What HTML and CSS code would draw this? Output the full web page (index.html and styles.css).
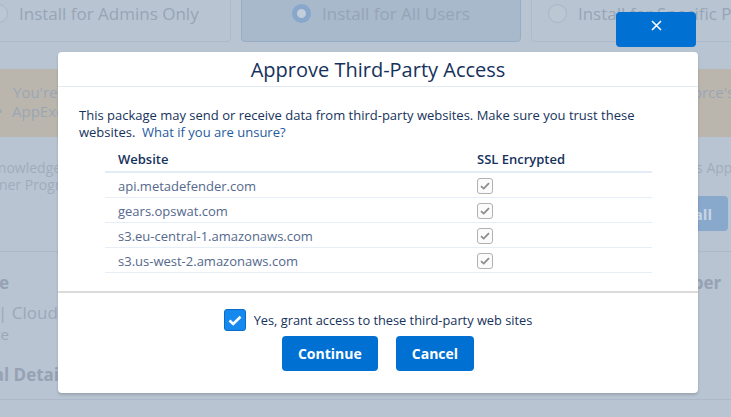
FILE: index.html
```html
<!DOCTYPE html>
<html lang="en">
<head>
  <meta charset="UTF-8" />
  <title>Approve Third-Party Access</title>
  <link rel="stylesheet" href="styles.css">
</head>
<body>
  <div class="page">
    <div class="options">
      <div class="option first"><span class="radio"></span>Install for Admins Only</div>
      <div class="option selected"><span class="radio on"></span>Install for All Users</div>
      <div class="option"><span class="radio"></span>Install for Specific Profiles...</div>
    </div>

    <div class="notice">
      <div class="row">
        <span class="left pad">You're installing a package made by a third party.</span>
        <span class="right notice-tail">Salesforce's</span>
      </div>
      <div class="row">
        <span class="left pad"><span class="dot">&bull;</span>AppExchange listing reviewed</span>
      </div>
    </div>

    <div class="terms">
      <div class="row">
        <span class="left ind-ack">acknowledge that I have read</span>
        <span class="right terms-tail">this AppExchange</span>
      </div>
      <div class="row">
        <span class="left ind-part">Partner Program terms</span>
      </div>
      <div class="install-row">
        <button class="ghost-btn">Install</button>
      </div>
    </div>

    <div class="details">
      <div class="row">
        <span class="left-end strong"><span>Package</span></span>
        <span class="right strong number-tail">Number</span>
      </div>
      <div class="row line-b">
        <span class="left ind-cloud">| Cloud Security</span>
      </div>
      <div class="row line-c">
        <span class="left-end"><span>Private</span></span>
      </div>
      <div class="row line-d">
        <span class="left strong ind-add">Additional Details</span>
      </div>
    </div>
  </div>

  <button class="close-btn" aria-label="Close">
    <svg width="11" height="11" viewBox="0 0 11 11"><path d="M1 1L10 10M10 1L1 10" stroke="#fff" stroke-width="1.6" fill="none"/></svg>
  </button>

  <div class="modal">
    <div class="modal-header">
      <h2>Approve Third-Party Access</h2>
    </div>
    <div class="modal-body">
      <p>This package may send or receive data from third-party websites. Make sure you trust these websites. &nbsp;<a href="#">What if you are unsure?</a></p>
      <table class="sites">
        <thead>
          <tr><th class="col-site">Website</th><th>SSL Encrypted</th></tr>
        </thead>
        <tbody>
          <tr><td>api.metadefender.com</td><td><span class="ssl"><svg width="10" height="8" viewBox="0 0 10 8"><path d="M1 4.2L3.7 6.6L9 1.2" stroke="#8c8c8c" stroke-width="1.8" fill="none"/></svg></span></td></tr>
          <tr><td>gears.opswat.com</td><td><span class="ssl"><svg width="10" height="8" viewBox="0 0 10 8"><path d="M1 4.2L3.7 6.6L9 1.2" stroke="#8c8c8c" stroke-width="1.8" fill="none"/></svg></span></td></tr>
          <tr><td>s3.eu-central-1.amazonaws.com</td><td><span class="ssl"><svg width="10" height="8" viewBox="0 0 10 8"><path d="M1 4.2L3.7 6.6L9 1.2" stroke="#8c8c8c" stroke-width="1.8" fill="none"/></svg></span></td></tr>
          <tr><td>s3.us-west-2.amazonaws.com</td><td><span class="ssl"><svg width="10" height="8" viewBox="0 0 10 8"><path d="M1 4.2L3.7 6.6L9 1.2" stroke="#8c8c8c" stroke-width="1.8" fill="none"/></svg></span></td></tr>
        </tbody>
      </table>
    </div>
    <div class="modal-footer">
      <label class="grant">
        <span class="box"><svg width="14" height="11" viewBox="0 0 14 11"><path d="M1.5 5.5L5.2 9L12.5 1.8" stroke="#fff" stroke-width="2.6" fill="none"/></svg></span>
        Yes, grant access to these third-party web sites
      </label>
      <div class="actions">
        <button class="btn">Continue</button>
        <button class="btn">Cancel</button>
      </div>
    </div>
  </div>
</body>
</html>
```

FILE: styles.css
```css
body {
  margin: 0;
  background: #b8c4d2;
  font-family: "Open Sans", Lato, sans-serif;
  color: #16325c;
  overflow: hidden;
  height: 417px;
}
.page {
  color: #97a4b6;
}

/* background page, under the overlay */
.options {
  display: flex;
  gap: 10px;
  margin-top: -18px;
  margin-left: -29px;
}
.option {
  flex: none;
  width: 280px;
  height: 60px;
  box-sizing: border-box;
  border: 1px solid #adbacb;
  border-radius: 4px;
  display: flex;
  align-items: center;
  justify-content: center;
  gap: 11px;
  padding-top: 2px;
  font-size: 17px;
  white-space: nowrap;
}
.option.first {
  width: 260px;
  justify-content: flex-start;
  padding-left: 17px;
}
.option.selected {
  background: #a8b9cc;
  border-color: #98acc3;
}
.radio {
  width: 19px;
  height: 19px;
  box-sizing: border-box;
  border-radius: 50%;
  border: 1px solid #a9b6c6;
  background: #bcc7d4;
}
.radio.on {
  border: 5px solid #88a7cb;
  background: #c3cedb;
}
.row {
  display: flex;
  justify-content: space-between;
  white-space: nowrap;
}
.right {
  flex: none;
  overflow: hidden;
}
.left-end {
  display: flex;
  justify-content: flex-end;
  width: 9px;
}
.pad {
  padding-left: 13px;
}
.dot {
  display: inline-block;
  width: 15px;
  margin-left: -16px;
}
.notice {
  margin-top: 27px;
  height: 68px;
  background: #bab6ae;
  box-sizing: border-box;
  padding-top: 14px;
  font-size: 15px;
  line-height: 19px;
  color: #9ba6b5;
}
.notice-tail { width: 79px; }
.terms {
  padding-top: 22px;
  font-size: 14px;
  line-height: 17px;
  color: #a0acbc;
}
.terms-tail { width: 52px; }
.ind-ack { text-indent: -24px; }
.ind-part { text-indent: -28px; }
.install-row {
  display: flex;
  justify-content: flex-end;
  padding: 3px 3px 0 0;
}
.ghost-btn {
  width: 90px;
  height: 35px;
  border: none;
  border-radius: 4px;
  background: #88a8cc;
  color: #c8d5e3;
  font: bold 15px "Open Sans", sans-serif;
  text-align: right;
  padding-right: 16px;
}
.details {
  margin-top: 20px;
  border-top: 1px solid #adb9c8;
  border-bottom: 1px solid #adb9c8;
  padding: 20px 0 13px;
  font-size: 17px;
  line-height: 22px;
  color: #9ca8b8;
}
.strong {
  font-weight: bold;
  color: #96a2b3;
}
.number-tail { width: 57px; text-indent: -23px; }
.line-b { margin-top: 8px; }
.line-c { font-size: 15px; line-height: 20px; }
.ind-cloud { text-indent: -2px; }
.line-d { margin-top: 20px; }
.ind-add { text-indent: -79px; }

/* modal */
.close-btn {
  position: absolute;
  top: 12px;
  left: 616px;
  width: 80px;
  height: 35px;
  border: none;
  border-radius: 4px;
  background: #0070d2;
  display: flex;
  align-items: center;
  justify-content: center;
  padding: 0 0 9px;
}
.modal {
  position: absolute;
  top: 52px;
  left: 58px;
  width: 640px;
  height: 341px;
  background: #fff;
  border-radius: 4px;
  box-shadow: 0 2px 3px rgba(0,0,0,0.16);
  display: flex;
  flex-direction: column;
}
.modal-header {
  height: 35px;
  box-sizing: border-box;
  border-bottom: 1px solid #e1e9f2;
  padding-top: 5px;
  text-align: center;
}
.modal-header h2 {
  margin: 0;
  font-size: 20px;
  line-height: 26px;
  font-weight: 500;
  color: #16325c;
}
.modal-body {
  padding: 20px 21px 0;
  flex: 1;
}
.modal-body p {
  margin: 0;
  font-size: 13px;
  line-height: 17px;
}
.modal-body a {
  color: #1f5aa0;
  text-decoration: none;
}
.sites {
  margin: 5px 0 0 26px;
  width: 547px;
  border-collapse: collapse;
  font-size: 13px;
}
.sites th {
  text-align: left;
  font-weight: 600;
  height: 25px;
  padding: 0 0 0 13px;
  border-bottom: 2px solid #e3ecf6;
  color: #16325c;
}
.sites .col-site {
  width: 346px;
}
.sites td {
  height: 23px;
  padding: 1px 0 0 13px;
  border-bottom: 1px solid #e6eef7;
  color: #54698d;
}
.ssl {
  width: 16px;
  height: 16px;
  box-sizing: border-box;
  border: 1px solid #b1b1b1;
  border-radius: 3px;
  background: #fbfbfb;
  display: flex;
  align-items: center;
  justify-content: center;
}
.modal-footer {
  border-top: 2px solid #dddbda;
  padding: 16px 0 22px;
  display: flex;
  flex-direction: column;
  align-items: center;
}
.grant {
  display: flex;
  align-items: center;
  gap: 8px;
  font-size: 12.8px;
  color: #16325c;
}
.box {
  width: 22px;
  height: 22px;
  box-sizing: border-box;
  border: 1px solid #0b6cc6;
  border-radius: 3px;
  background: #1589ee;
  display: flex;
  align-items: center;
  justify-content: center;
}
.actions {
  display: flex;
  gap: 18px;
  margin-top: 5px;
}
.btn {
  height: 35px;
  padding: 0 16px;
  border: none;
  border-radius: 4px;
  background: #0070d2;
  color: #fff;
  font: bold 14px "Open Sans", sans-serif;
}
```
